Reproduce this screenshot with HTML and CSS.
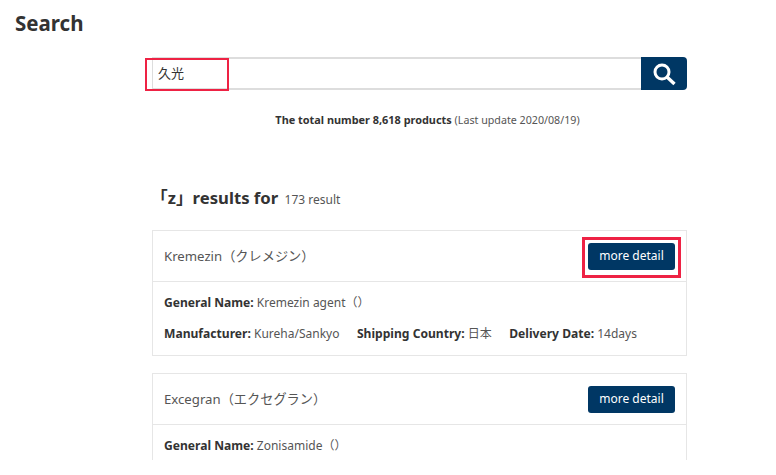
FILE: index.html
```html
<!DOCTYPE html>
<html lang="ja">
<head>
<meta charset="utf-8">
<title>Search</title>
<link rel="stylesheet" href="styles.css">
</head>
<body>
<div class="page">
<h1 class="page-title">Search</h1>
<main class="content">
  <form class="search">
    <div class="search-field">
      <span class="search-value">久光</span>
      <span class="mark mark-input"></span>
    </div>
    <button class="search-btn" type="button" aria-label="search">
      <svg width="24" height="24" viewBox="0 0 24 24" fill="none" stroke="#fff"><circle cx="10" cy="10" r="7" stroke-width="3"/><path d="M15 15l7.5 7" stroke-width="3.4"/></svg>
    </button>
  </form>
  <p class="total"><b>The total number 8,618 products</b> <small>(Last update 2020/08/19)</small></p>
  <h2 class="results"><b>「z」results for</b> <small>173 result</small></h2>
  <article class="card">
    <header class="card-head">
      <span class="name">Kremezin（クレメジン）</span>
      <span class="btn-wrap"><a class="btn">more detail</a><span class="mark mark-btn"></span></span>
    </header>
    <div class="card-body">
      <p class="row"><span><b>General Name:</b> Kremezin agent（）</span></p>
      <p class="row"><span><b>Manufacturer:</b> Kureha/Sankyo</span><span><b>Shipping Country:</b> 日本</span><span><b>Delivery Date:</b> 14days</span></p>
    </div>
  </article>
  <article class="card">
    <header class="card-head">
      <span class="name">Excegran（エクセグラン）</span>
      <a class="btn">more detail</a>
    </header>
    <div class="card-body">
      <p class="row"><span><b>General Name:</b> Zonisamide（）</span></p>
    </div>
  </article>
</main>
</div>
</body>
</html>
```
FILE: styles.css
```css
html, body { margin: 0; padding: 0; background: #fff; overflow: hidden; height: 100%; }
body { font-family: "Noto Sans", "Noto Sans CJK JP", sans-serif; color: #555; font-size: 12px; }
p, h1, h2 { margin: 0; }
b { color: #333; font-weight: 700; }
.page { height: 460px; overflow: hidden; }
.page-title { font-size: 20.5px; font-weight: 700; line-height: 26px; padding: 10px 0 0 15px; color: #333; }
.content { width: 535px; margin: 21px 0 0 152px; }
.search { display: flex; height: 33px; }
.search-field { flex: 1; position: relative; box-sizing: border-box; border: 2px solid #ddd; border-width: 2px 0 2px 1px; display: flex; align-items: center; padding: 0 0 3px 5px; font-size: 13px; color: #333; }
.search-btn { width: 46px; border: 0; padding: 0; background: #003764; border-radius: 0 4px 4px 0; display: flex; align-items: center; justify-content: center; }
.mark { position: absolute; border: 2px solid #ee2244; box-sizing: border-box; pointer-events: none; }
.mark-input { left: -8px; top: -1px; width: 84px; height: 33px; }
.total { text-align: center; font-size: 10.9px; margin-top: 23px; padding-left: 16px; line-height: 14px; }
.total small { font-size: 10.7px; }
.results { font-size: 16.7px; line-height: 22px; margin-top: 60px; margin-left: -1px; }
.results small { font-size: 12px; font-weight: 400; margin-left: 2px; }
.card { border: 1px solid #e6e6e6; margin-top: 19px; }
.card + .card { margin-top: 17px; }
.card-head { display: flex; justify-content: space-between; align-items: center; height: 50px; padding: 0 11px; border-bottom: 1px solid #e6e6e6; }
.name { font-size: 13.2px; padding-bottom: 2px; }
.btn-wrap { position: relative; display: flex; }
.btn { display: block; width: 87px; height: 27px; line-height: 26px; text-align: center; background: #003764; color: #fff; font-size: 12px; border-radius: 3px; }
.mark-btn { left: -6px; top: -6px; width: 99px; height: 41px; border-width: 3px; }
.card-body { padding: 13px 11px 13px; }
.row { display: flex; gap: 17.5px; font-size: 12px; line-height: 16px; }
.row b { font-size: 12.1px; }
.row + .row { margin-top: 15px; }
```
